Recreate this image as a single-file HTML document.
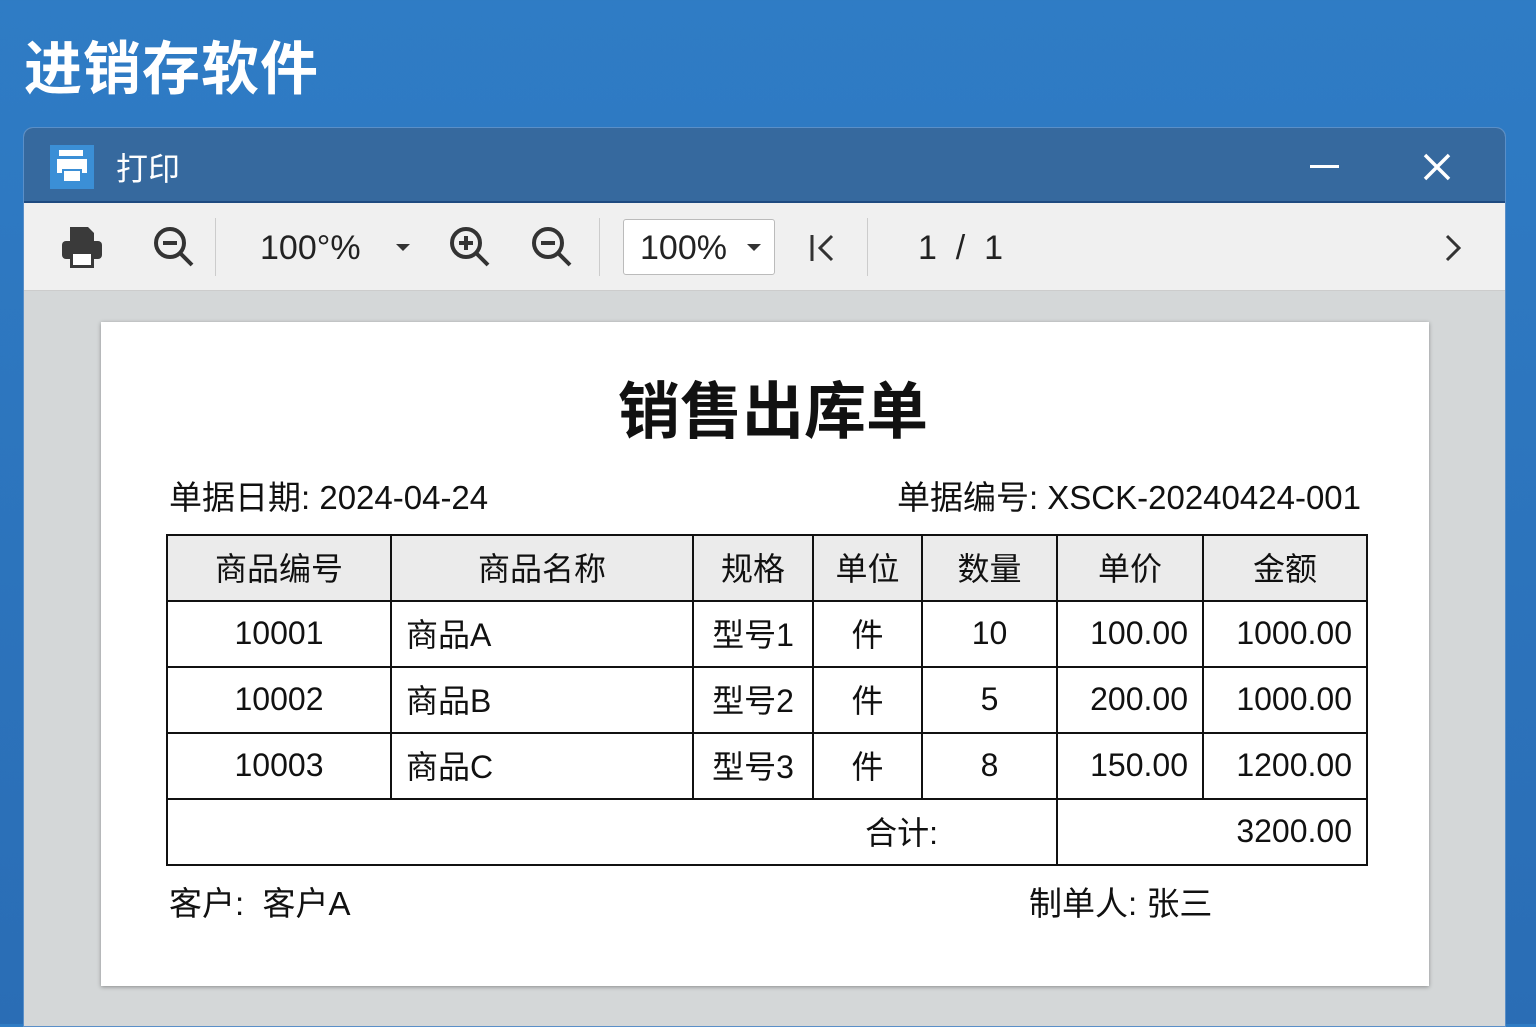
<!DOCTYPE html>
<html><head><meta charset="utf-8"><style>
*{margin:0;padding:0;box-sizing:border-box}
body{width:1536px;height:1024px;overflow:hidden;background:linear-gradient(180deg,#2f7cc5,#2a6db5);font-family:"Liberation Sans","Noto Sans CJK SC",sans-serif;position:relative}
.abs{position:absolute}
.h1{left:24px;top:22px;font-size:58px;font-weight:bold;color:#fff;letter-spacing:1px}
.win{left:23px;top:127px;width:1483px;height:900px;border-radius:10px 10px 0 0;background:#d4d7d8;overflow:hidden;border:1px solid #5a8fc8}
.tb{left:0;top:0;width:100%;height:75px;background:#36699e;border-bottom:2px solid #1e4a80}
.tool{left:0;top:75px;width:100%;height:88px;background:#f0f0f0;border-bottom:1px solid #ccc}
.t{color:#222;font-size:34px}
.sep{width:1px;height:58px;background:#ccc;top:15px}
.paper{left:77px;top:194px;width:1328px;height:664px;background:#fff;box-shadow:0 1px 4px rgba(0,0,0,.35)}
table{position:absolute;left:65px;top:212px;width:1200px;table-layout:fixed;border-collapse:collapse;font-size:32px;color:#111}
td{border:2px solid #111;height:66px;padding:0 14px 2px;white-space:nowrap}
th{border:2px solid #111;height:66px;background:#ebebeb;font-weight:normal;font-size:32px;padding-bottom:2px}
.c{text-align:center}.r{text-align:right}
</style></head><body>
<div class="abs h1">进销存软件</div>
<div class="abs win">
 <div class="abs tb">
  <div class="abs" style="left:26px;top:17px;width:44px;height:44px;background:#3b8fd6">
   <div class="abs" style="left:9px;top:5px;width:24px;height:6px;background:#fff"></div>
   <div class="abs" style="left:7px;top:14px;width:30px;height:14px;background:#fff"></div>
   <div class="abs" style="left:12px;top:24px;width:20px;height:14px;background:#fff;border:2px solid #3b8fd6"></div>
  </div>
  <div class="abs" style="left:92px;top:16px;font-size:32px;color:#fff">打印</div>
  <div class="abs" style="left:1286px;top:37px;width:29px;height:3px;background:#fff"></div>
  <svg class="abs" style="left:1398px;top:24px" width="30" height="30"><path d="M3 3L27 27M27 3L3 27" stroke="#fff" stroke-width="3.5"/></svg>
 </div>
 <div class="abs tool">
  <svg class="abs" style="left:36px;top:22px" width="44" height="44"><path d="M10 2h18l6 6v8H10z" fill="#3a3a3a"/><rect x="2" y="16" width="40" height="18" rx="4" fill="#3a3a3a"/><rect x="10" y="26" width="24" height="17" fill="#3a3a3a"/><rect x="13" y="29" width="18" height="11" fill="#fff"/></svg>
  <svg class="abs" style="left:128px;top:22px" width="44" height="44"><circle cx="18" cy="18" r="14" fill="none" stroke="#333" stroke-width="4"/><path d="M11 18h14M28 28l12 12" stroke="#333" stroke-width="4"/></svg>
  <div class="abs sep" style="left:191px"></div>
  <div class="abs t" style="left:236px;top:26px">100°%</div>
  <div class="abs" style="left:372px;top:41px;border:7px solid transparent;border-top:7px solid #333"></div>
  <svg class="abs" style="left:424px;top:22px" width="44" height="44"><circle cx="18" cy="18" r="14" fill="none" stroke="#333" stroke-width="4"/><path d="M11 18h14M18 11v14M28 28l12 12" stroke="#333" stroke-width="4"/></svg>
  <svg class="abs" style="left:506px;top:22px" width="44" height="44"><circle cx="18" cy="18" r="14" fill="none" stroke="#333" stroke-width="4"/><path d="M11 18h14M28 28l12 12" stroke="#333" stroke-width="4"/></svg>
  <div class="abs sep" style="left:575px"></div>
  <div class="abs" style="left:599px;top:16px;width:152px;height:56px;background:#fff;border:1px solid #bbb;border-radius:3px"></div>
  <div class="abs t" style="left:616px;top:26px">100%</div>
  <div class="abs" style="left:723px;top:41px;border:7px solid transparent;border-top:7px solid #333"></div>
  <svg class="abs" style="left:784px;top:30px" width="30" height="30"><path d="M4 2v26M24 3L12 15l12 12" stroke="#333" stroke-width="3" fill="none"/></svg>
  <div class="abs sep" style="left:843px"></div>
  <div class="abs t" style="left:894px;top:26px">1 &nbsp;/ &nbsp;1</div>
  <svg class="abs" style="left:1417px;top:30px" width="24" height="30"><path d="M6 3l12 12L6 27" stroke="#333" stroke-width="3" fill="none"/></svg>
 </div>
 <div class="abs paper">
  <div class="abs" style="left:0;width:100%;top:39px;padding-left:16px;text-align:center;font-size:62px;font-weight:bold;color:#111">销售出库单</div>
  <div class="abs" style="left:68px;top:149px;font-size:33px;color:#111">单据日期: 2024-04-24</div>
  <div class="abs" style="right:68px;top:149px;font-size:33px;color:#111">单据编号: XSCK-20240424-001</div>
  <table>
   <colgroup><col style="width:224px"><col style="width:302px"><col style="width:120px"><col style="width:109px"><col style="width:135px"><col style="width:146px"><col style="width:164px"></colgroup>
   <tr><th>商品编号</th><th>商品名称</th><th>规格</th><th>单位</th><th>数量</th><th>单价</th><th>金额</th></tr>
   <tr><td class="c">10001</td><td>商品A</td><td class="c">型号1</td><td class="c">件</td><td class="c">10</td><td class="r">100.00</td><td class="r">1000.00</td></tr>
   <tr><td class="c">10002</td><td>商品B</td><td class="c">型号2</td><td class="c">件</td><td class="c">5</td><td class="r">200.00</td><td class="r">1000.00</td></tr>
   <tr><td class="c">10003</td><td>商品C</td><td class="c">型号3</td><td class="c">件</td><td class="c">8</td><td class="r">150.00</td><td class="r">1200.00</td></tr>
   <tr><td colspan="5" class="r" style="padding-right:118px">合计:</td><td colspan="2" class="r">3200.00</td></tr>
  </table>
  <div class="abs" style="left:68px;top:555px;font-size:33px;color:#111">客户: &nbsp;客户A</div>
  <div class="abs" style="left:928px;top:555px;font-size:33px;color:#111">制单人: 张三</div>
 </div>
</div>
</body></html>
